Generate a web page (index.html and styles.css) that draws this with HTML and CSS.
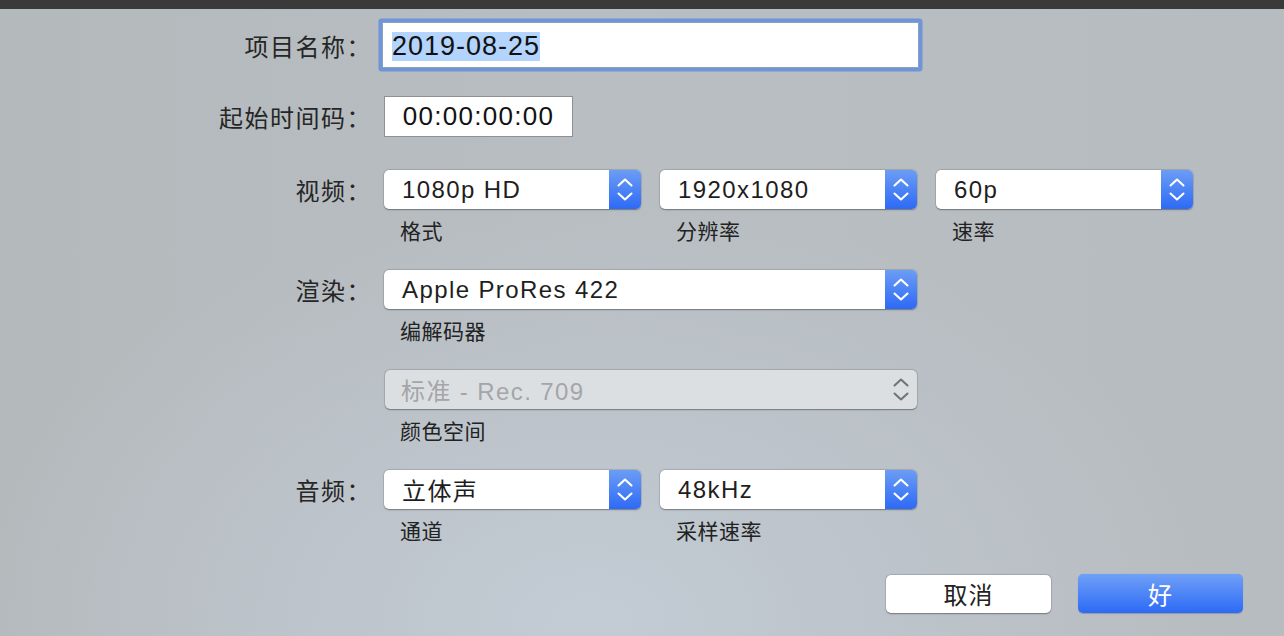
FILE: index.html
```html
<!DOCTYPE html>
<html lang="zh-CN">
<head>
<meta charset="utf-8">
<title>项目设置</title>
<link rel="stylesheet" href="styles.css">
</head>
<body>
<div class="topbar"></div>
<main class="sheet">
  <div class="row row-name">
    <div class="label">项目名称：</div>
    <div class="namefield"><span class="sel">2019-08-25</span></div>
  </div>

  <div class="row row-tc">
    <div class="label">起始时间码：</div>
    <div class="tcfield">00:00:00:00</div>
  </div>

  <div class="row row-pop">
    <div class="label lbl-pop">视频：</div>
    <div class="group">
      <div class="popup w1"><span class="ptext">1080p HD</span><span class="arrows"><svg viewBox="0 0 32 38" width="32" height="38"><path d="M9.5 14.5 L16 8.5 L22.5 14.5 M9.5 22.5 L16 28.5 L22.5 22.5"/></svg></span></div>
      <div class="sublabel">格式</div>
    </div>
    <div class="group">
      <div class="popup w1"><span class="ptext">1920x1080</span><span class="arrows"><svg viewBox="0 0 32 38" width="32" height="38"><path d="M9.5 14.5 L16 8.5 L22.5 14.5 M9.5 22.5 L16 28.5 L22.5 22.5"/></svg></span></div>
      <div class="sublabel">分辨率</div>
    </div>
    <div class="group">
      <div class="popup w1"><span class="ptext">60p</span><span class="arrows"><svg viewBox="0 0 32 38" width="32" height="38"><path d="M9.5 14.5 L16 8.5 L22.5 14.5 M9.5 22.5 L16 28.5 L22.5 22.5"/></svg></span></div>
      <div class="sublabel">速率</div>
    </div>
  </div>

  <div class="row row-pop">
    <div class="label lbl-pop">渲染：</div>
    <div class="group">
      <div class="popup w2"><span class="ptext">Apple ProRes 422</span><span class="arrows"><svg viewBox="0 0 32 38" width="32" height="38"><path d="M9.5 14.5 L16 8.5 L22.5 14.5 M9.5 22.5 L16 28.5 L22.5 22.5"/></svg></span></div>
      <div class="sublabel">编解码器</div>
    </div>
  </div>

  <div class="row row-pop">
    <div class="label lbl-pop"></div>
    <div class="group">
      <div class="popup w2 disabled"><span class="ptext">标准 - Rec. 709</span><span class="arrows"><svg viewBox="0 0 32 38" width="32" height="38"><path d="M9.5 14.5 L16 8.5 L22.5 14.5 M9.5 22.5 L16 28.5 L22.5 22.5"/></svg></span></div>
      <div class="sublabel">颜色空间</div>
    </div>
  </div>

  <div class="row row-pop">
    <div class="label lbl-pop">音频：</div>
    <div class="group">
      <div class="popup w1"><span class="ptext">立体声</span><span class="arrows"><svg viewBox="0 0 32 38" width="32" height="38"><path d="M9.5 14.5 L16 8.5 L22.5 14.5 M9.5 22.5 L16 28.5 L22.5 22.5"/></svg></span></div>
      <div class="sublabel">通道</div>
    </div>
    <div class="group">
      <div class="popup w1"><span class="ptext">48kHz</span><span class="arrows"><svg viewBox="0 0 32 38" width="32" height="38"><path d="M9.5 14.5 L16 8.5 L22.5 14.5 M9.5 22.5 L16 28.5 L22.5 22.5"/></svg></span></div>
      <div class="sublabel">采样速率</div>
    </div>
  </div>

  <div class="buttons">
    <button class="btn cancel">取消</button>
    <button class="btn ok">好</button>
  </div>
</main>
</body>
</html>
```

FILE: styles.css
```css
html, body {
  margin: 0;
  padding: 0;
  height: 100%;
}
body {
  width: 1284px;
  height: 636px;
  overflow: hidden;
  font-family: "Liberation Sans", "Noto Sans CJK SC", sans-serif;
  color: #222;
  background:
    radial-gradient(ellipse 620px 420px at 46% 98%, #c3ccd5 0%, #bdc4cb 45%, rgba(183,188,193,0) 100%),
    linear-gradient(90deg, #b4b9bc 0%, #b8bec2 50%, #b7bcc0 100%);
}
.topbar {
  height: 9px;
  background: #3a3a3a;
}
.sheet {
  display: flex;
  flex-direction: column;
}
.row {
  display: flex;
  align-items: flex-start;
  gap: 12px;
}
.label {
  width: 372px;
  flex: none;
  text-align: right;
  font-family: "Noto Sans CJK SC", sans-serif;
  font-size: 24px;
  letter-spacing: 1.5px;
  color: #262626;
}
.row-name {
  margin-top: 13px;
  height: 46px;
  align-items: center;
}
.namefield {
  margin-left: -2px;
  width: 526px;
  height: 44px;
  background: #fff;
  border: 1px solid #8ea0c0;
  box-shadow: 0 0 0 3.5px #6f94d8;
  border-radius: 1px;
  display: flex;
  align-items: center;
  padding-left: 9px;
  box-sizing: content-box;
}
.sel {
  background: #b3d4fc;
  font-size: 27px;
  line-height: 29px;
  letter-spacing: 1px;
  color: #111;
  margin-top: 2px;
}
.row-tc {
  margin-top: 28px;
  height: 41px;
  align-items: center;
}
.tcfield {
  width: 187px;
  height: 39px;
  background: #fff;
  border: 1px solid #8d9196;
  font-size: 26px;
  letter-spacing: 1.3px;
  line-height: 39px;
  text-align: center;
  color: #111;
}
.row-pop {
  margin-top: 24px;
}
.row-tc + .row-pop {
  margin-top: 33px;
}
.lbl-pop {
  line-height: 39px;
}
.row-pop .group + .group {
  margin-left: 7px;
}
.group {
  display: flex;
  flex-direction: column;
}
.popup {
  height: 39px;
  background: #fff;
  border-radius: 5px;
  box-shadow: 0 0.5px 1.5px rgba(0,0,0,0.35), 0 0 0 0.5px rgba(0,0,0,0.12);
  display: flex;
  align-items: center;
  justify-content: space-between;
  overflow: hidden;
}
.w1 { width: 257px; }
.w2 { width: 533px; }
.ptext {
  padding-left: 18px;
  font-size: 24px;
  letter-spacing: 1.4px;
  color: #1e1e1e;
  white-space: nowrap;
}
.arrows {
  width: 32px;
  height: 39px;
  flex: none;
  background: linear-gradient(#6c9df4, #2d6af6);
  display: flex;
  align-items: center;
  justify-content: center;
}
.arrows svg path {
  fill: none;
  stroke: #fff;
  stroke-width: 2.1;
  stroke-linecap: round;
  stroke-linejoin: round;
}
.popup.disabled {
  background: #dcdfe2;
  margin-left: 1px;
  width: 532px;
}
.popup.disabled .ptext {
  color: #a3a6a9;
  padding-left: 16px;
}
.popup.disabled .arrows {
  background: none;
}
.popup.disabled .arrows svg path {
  stroke: #707377;
}
.sublabel {
  margin-top: 8px;
  height: 26px;
  line-height: 26px;
  padding-left: 16px;
  font-family: "Noto Sans CJK SC", sans-serif;
  font-size: 21px;
  letter-spacing: 0.5px;
  color: #222;
  margin-bottom: 3px;
}
.buttons {
  margin-top: 29px;
  display: flex;
  justify-content: flex-end;
  gap: 27px;
  padding-right: 41px;
}
.btn {
  width: 165px;
  height: 38px;
  border: none;
  border-radius: 5px;
  font-family: "Noto Sans CJK SC", sans-serif;
  font-size: 24px;
  letter-spacing: 1px;
  padding: 0;
  line-height: 38px;
}
.cancel {
  background: #fff;
  color: #222;
  box-shadow: 0 0.5px 1.5px rgba(0,0,0,0.35), 0 0 0 0.5px rgba(0,0,0,0.12);
}
.ok {
  height: 39px;
  margin-top: -1px;
  background: linear-gradient(#70a0f7, #2c6af6);
  color: #fff;
  box-shadow: 0 0.5px 1px rgba(0,0,0,0.2);
}
```
